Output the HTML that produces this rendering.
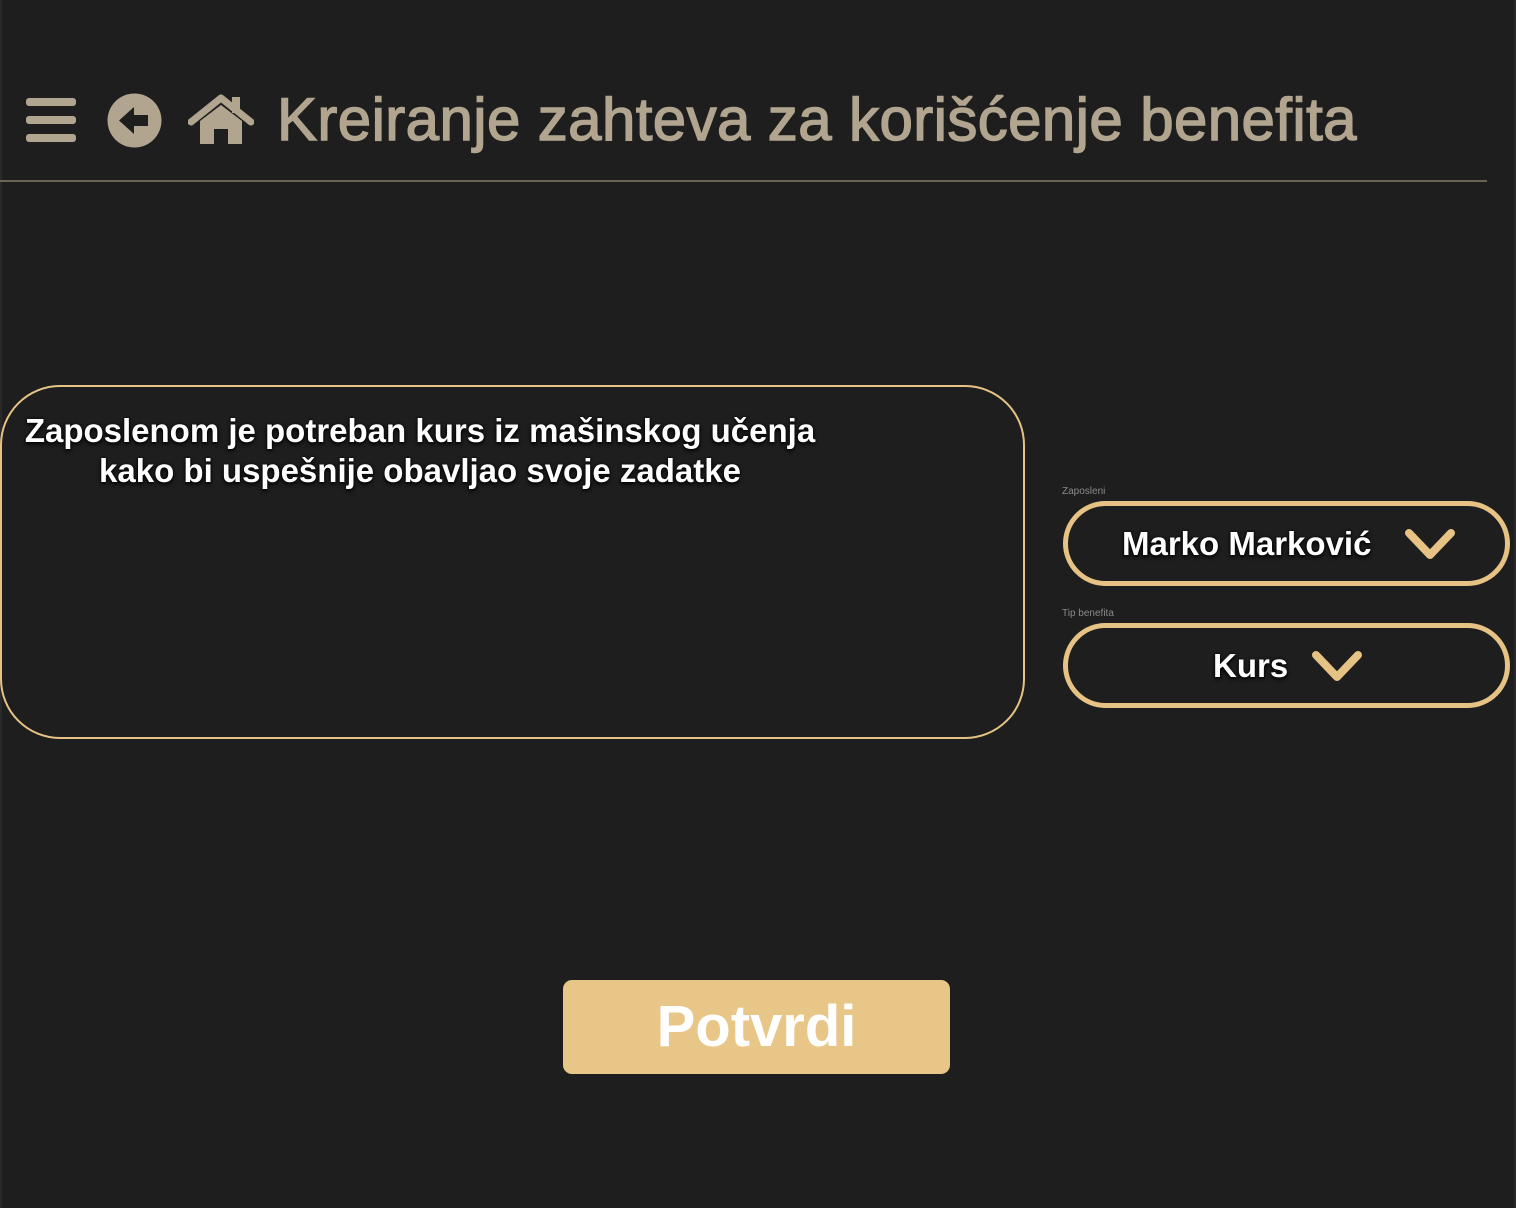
<!DOCTYPE html>
<html><head><meta charset="utf-8"><style>
*{margin:0;padding:0;box-sizing:border-box}
body{width:1516px;height:1208px;background:#1e1e1e;position:relative;overflow:hidden;font-family:"Liberation Sans",sans-serif}
.bl{position:absolute;top:0;width:2px;height:1208px;background:#2a2a2a}
.title{position:absolute;left:277px;top:85px;font-size:60px;color:#b2a590;white-space:nowrap;-webkit-text-stroke:1.4px #b2a590;letter-spacing:0.4px}
.line{position:absolute;left:0;top:180px;width:1487px;height:2px;background:#6b6353}
.ta{position:absolute;left:0;top:385px;width:1025px;height:354px;border:2px solid #e6c384;border-radius:60px}
.ta p{position:absolute;left:-2px;width:840px;top:24px;text-align:center;color:#fff;font-weight:bold;font-size:33px;line-height:40px;text-shadow:0 2px 4px #000,0 0 2px #000;white-space:nowrap}
.lbl{position:absolute;left:1062px;font-size:10px;color:#8a8a8a}
.dd{position:absolute;left:1063px;width:447px;height:85px;border:5px solid #e6c384;border-radius:43px;color:#fff;font-weight:bold;font-size:33px;text-shadow:0 2px 4px #000,0 0 2px #000}
.dd span{position:absolute;top:19px}
.dd svg{position:absolute}
.btn{position:absolute;left:563px;top:980px;width:387px;height:94px;background:#e8c687;border-radius:9px;color:#fff;font-size:58px;font-weight:bold;text-align:center;line-height:94px}
</style></head><body>
<div class="bl" style="left:0"></div><div class="bl" style="right:0"></div>
<svg style="position:absolute;left:26px;top:97px" width="50" height="46"><rect x="0" y="1" width="50" height="8" rx="3" fill="#b2a590"/><rect x="0" y="19" width="50" height="8" rx="3" fill="#b2a590"/><rect x="0" y="37" width="50" height="8" rx="3" fill="#b2a590"/></svg>
<svg style="position:absolute;left:107px;top:93px" width="55" height="55"><circle cx="27.5" cy="27.5" r="27" fill="#b2a590"/><path d="M12 27.5 L27 14 L27 22 L41 22 L41 33 L27 33 L27 41 Z" fill="#1e1e1e"/></svg>
<svg style="position:absolute;left:188px;top:94px" width="66" height="52"><path d="M3 28 L33 4 L63 28" stroke="#b2a590" stroke-width="7" fill="none" stroke-linecap="round" stroke-linejoin="round"/><rect x="44" y="3" width="8" height="16" fill="#b2a590"/><path d="M12 27 L33 11 L54 27 L54 50 L40 50 L40 35 L26 35 L26 50 L12 50 Z" fill="#b2a590"/></svg>
<div class="title">Kreiranje zahteva za korišćenje benefita</div>
<div class="line"></div>
<div class="ta"><p>Zaposlenom je potreban kurs iz mašinskog učenja<br>kako bi uspešnije obavljao svoje zadatke</p></div>
<div class="lbl" style="top:486px">Zaposleni</div>
<div class="dd" style="top:501px"><span style="left:54px">Marko Marković</span><svg style="left:336px;top:22px" width="52" height="34"><path d="M5 5 L26 27 L47 5" stroke="#e6c384" stroke-width="8" fill="none" stroke-linecap="round" stroke-linejoin="round"/></svg></div>
<div class="lbl" style="top:608px">Tip benefita</div>
<div class="dd" style="top:623px"><span style="left:145px">Kurs</span><svg style="left:243px;top:22px" width="52" height="34"><path d="M5 5 L26 27 L47 5" stroke="#e6c384" stroke-width="8" fill="none" stroke-linecap="round" stroke-linejoin="round"/></svg></div>
<div class="btn">Potvrdi</div>
</body></html>
